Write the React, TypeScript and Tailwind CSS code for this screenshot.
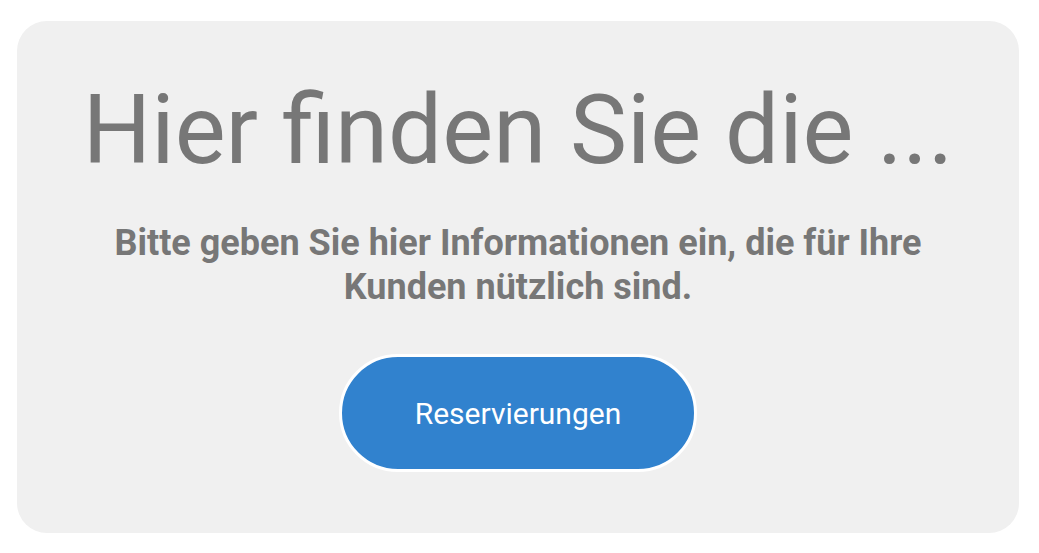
export default function App() {
  return (
    <div className="w-[1039px] h-[553px] bg-white pt-[21px] pl-[17px]" style={{ fontFamily: "Roboto, sans-serif" }}>
      <div className="w-[1002px] h-[512px] bg-[#f0f0f0] rounded-[30px] flex flex-col items-center pt-[59px]">
        <h1 className="text-[96px] leading-[100px] text-[#777777] font-normal text-center">Hier finden Sie die ...</h1>
        <p className="mt-[41px] w-[840px] text-[36px] leading-[44px] font-bold text-[#777777] text-center">
          Bitte geben Sie hier Informationen ein, die für Ihre Kunden nützlich sind.
        </p>
        <button className="mt-[45px] w-[358px] h-[118px] rounded-full bg-[#3182ce] border-[3px] border-white text-white text-[30px]">
          Reservierungen
        </button>
      </div>
    </div>
  );
}
